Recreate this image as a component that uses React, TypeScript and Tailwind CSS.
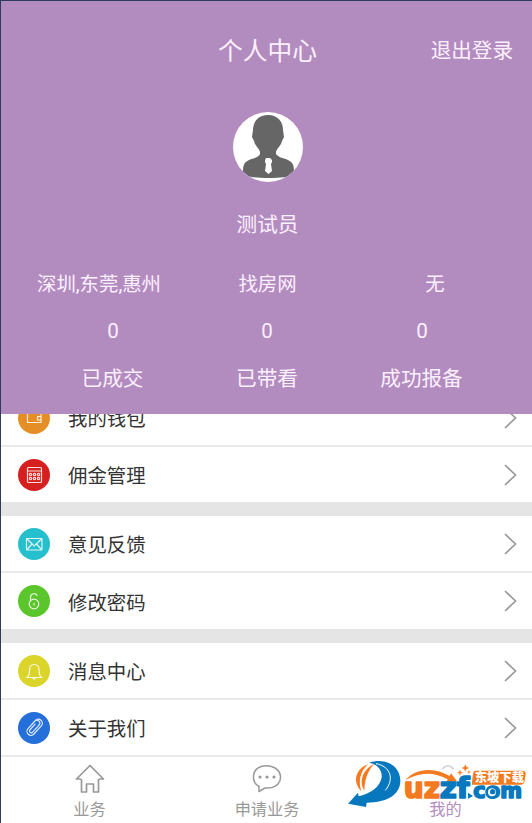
import React from 'react';

const Wallet = () => (
  <g>
    <path d="M9.500 11.500h13.500v9h-13.500z M9.500 11.500l2-2.500h10l1.500 2.500" />
    <path d="M23 14.500h-3.500v3.500h3.500" />
  </g>
);
const Calculator = () => (
  <g>
    <rect x="9.500" y="8.500" width="14" height="15" rx="1" />
    <path d="M9.500 12h14" />
    {[15.5, 19.5].map((y) =>
      [12.5, 16.500, 20.500].map((x) => <circle key={`${x}-${y}`} cx={x} cy={y} r="1.200" />),
    )}
  </g>
);
const Mail = () => (
  <g>
    <rect x="8.500" y="10.500" width="15.500" height="11.500" rx="0.500" />
    <path d="M9 11l7.250 7 7.250-7 M9 21.500l5-5.500 M23.500 21.500l-5-5.500" />
  </g>
);
const Lock = () => (
  <g>
    <circle cx="16" cy="19" r="4.800" />
    <path d="M12.500 16v-3.800a3.500 3.500 0 0 1 6.800-1.200 M16 18v2.500" />
  </g>
);
const Bell = () => (
  <path d="M9 22.500h14.500c-2.300-1.700-2.500-3.500-2.500-7.500 0-3.300-2-5.500-4.750-5.500s-4.750 2.200-4.750 5.500c0 4-.2 5.800-2.500 7.500z M14.500 22.800q1.700 2.800 3.500 0" />
);
const Clip = () => (
  <g transform="rotate(42 16 16)">
    <path d="M20 12v8.500a4 4 0 0 1-8 0v-10a2.900 2.900 0 0 1 5.800 0v9.500a1.800 1.800 0 0 1-3.600 0v-8 M12 12v-2.500a4 4 0 0 1 8 0V13" />
  </g>
);

function Row({ label, color, height = 'h-[57px] border-b-2', children }: {
  label: string; color: string; height?: string; children: React.ReactNode;
}) {
  return (
    <div className={`flex ${height} shrink-0 items-center border-[#e9e9e9] bg-white pl-[17px] pr-[15px]`}>
      <svg className={`h-8 w-8 rounded-full ${color}`} viewBox="0 0 32 32" fill="none" stroke="#fff" strokeOpacity=".85" strokeWidth="1.200">
        {children}
      </svg>
      <span className="ml-[18px] pt-[5px] text-[19.4px] leading-7 text-[#333]">{label}</span>
      <svg className="ml-auto h-[22px] w-[14px]" viewBox="0 0 14 22" fill="none" stroke="#999" strokeWidth="1.700">
        <path d="M2 1l10.500 10L2 21" />
      </svg>
    </div>
  );
}

function Watermark() {
  return (
    <svg className="absolute left-[339px] top-[749px] h-[73px] w-[192px]" viewBox="0 0 576 219">
      <path d="M64 124C38 98 44 58 84 43C59 66 55 94 64 124z" fill="#f47a20" />
      <path d="M73 122C55 92 70 58 102 42C81 66 74 92 73 122z" fill="#f47a20" />
      <path d="M88 38C135 23 180 45 181 91C182 132 145 158 80 158L78 171L24 161L54 128L56 139C95 130 121 109 125 82C127 59 112 43 88 38z" fill="#0878be" />
      <path d="M108 41C150 48 165 86 136 121" fill="none" stroke="#fff" strokeWidth="3" />
      <path d="M196 91C225 53 285 51 329 78L333 70L351 94L319 98L323 88C281 63 235 67 196 91z" fill="#f47a20" />
      <g fontFamily="DejaVu Sans, sans-serif" fontWeight="700" strokeWidth="5" strokeLinejoin="round">
        <text x="191" y="143" fontSize="84" textLength="109" lengthAdjust="spacingAndGlyphs" fill="#f47a20" stroke="#f47a20">uz</text>
        <text x="299" y="143" fontSize="84" textLength="90" lengthAdjust="spacingAndGlyphs" fill="#0878be" stroke="#0878be">zf</text>
        <text x="400" y="144" fontSize="65" textLength="146" lengthAdjust="spacingAndGlyphs" fill="#0878be" stroke="#0878be">com</text>
      </g>
      <path d="M384 128l15 10-15 8z" fill="#0878be" />
      <circle cx="456" cy="127" r="16" fill="#fff" stroke="#0878be" strokeWidth="8" />
      <circle cx="458" cy="125" r="8" fill="#0878be" />
      <path d="M408 62H548Q558 62 557 72L554 93Q552 104 542 104H395L399 72Q400 62 408 62z" fill="#f47a20" />
      <text x="404" y="97" fontSize="36" fontWeight="900" fontFamily="Noto Sans CJK SC, sans-serif" textLength="148" lengthAdjust="spacingAndGlyphs" fill="#fff">东坡下载</text>
      <path d="M376 44l3 7 7 3-7 3-3 7-3-7-7-3 7-3z M360 60l2 6 6 2-6 2-2 6-2-6-6-2 6-2z M387 61l1 4 4 1-4 1-1 4-1-4-4-1 4-1z" fill="#f47a20" stroke="#f47a20" />
      <path d="M307 57q16-19 34 0" fill="none" stroke="#cfc5d3" strokeWidth="4" />
    </svg>
  );
}

export default function App() {
  return (
    <div className="relative flex h-[823px] w-[532px] flex-col overflow-hidden border-l border-t border-[#2c3c5d] bg-white font-['Roboto','Noto_Sans_CJK_SC',sans-serif]">
      <header className="flex h-[413px] shrink-0 flex-col bg-[#b38cbf] text-[#fcf0ff]">
        <div className="grid h-[99px] grid-cols-[1fr_auto_1fr] items-center pl-[1px] pr-[19px] pt-[1px]">
          <span />
          <h1 className="pl-[20px] pt-px text-[24.7px] leading-8">个人中心</h1>
          <span className="text-right text-[20.6px] leading-7">退出登录</span>
        </div>
        <svg className="mx-auto mt-[12px] h-[70px] w-[70px] shrink-0 translate-x-[1px] rounded-full bg-white" viewBox="0 0 70 70">
          <path d="M35 3c10 0 15 7 15 15l1 7-2 4c-1 5-5 7-6 11v2c3 4 8 4 12 6 6 3 6 6 6 15-8 4-43 4-51 0 0-9 0-12 6-15 4-2 9-2 11-6v-2c-1-4-5-6-6-11l-2-4 1-7C20 10 25 3 35 3z" fill="#666" />
          <path d="M33 46h4l2 2v2l-1 2 1 7-3.500 3-3.500-3 1-7-1-2v-2z" fill="#fff" />
        </svg>
        <div className="mt-[29px] pl-[2px] text-center text-[20.6px] leading-7">测试员</div>
        <div className="mt-[32px] grid grid-cols-[196px_141px_194px] text-center text-[19.4px] leading-7">
          <span>深圳,东莞,惠州</span><span>找房网</span><span>无</span>
        </div>
        <div className="mt-[18px] grid grid-cols-[224px_84px_226px] text-center text-[20.6px] leading-7">
          <span>0</span><span>0</span><span>0</span>
        </div>
        <div className="mt-5 grid grid-cols-[223px_86px_223px] text-center text-[20.6px] leading-7">
          <span>已成交</span><span>已带看</span><span>成功报备</span>
        </div>
      </header>
      <main className="flex shrink-0 flex-col bg-[#e5e5e5]">
        <div className="flex h-[33px] flex-col justify-end overflow-hidden">
          <Row label="我的钱包" color="bg-[#e58e25]"><Wallet /></Row>
        </div>
        <Row label="佣金管理" color="bg-[#d5201f]" height="h-[55px]"><Calculator /></Row>
        <div className="mt-[14px]">
          <Row label="意见反馈" color="bg-[#26bfcd]"><Mail /></Row>
          <Row label="修改密码" color="bg-[#5ac62b]" height="h-[56px]"><Lock /></Row>
        </div>
        <div className="mt-[14px]">
          <Row label="消息中心" color="bg-[#dbd42b]"><Bell /></Row>
          <Row label="关于我们" color="bg-[#246fda]"><Clip /></Row>
        </div>
      </main>
      <nav className="grid flex-1 grid-cols-3 text-center text-[16.200px] leading-6 text-[#999]">
        <div className="flex flex-col items-center pt-[7px]">
          <svg className="h-[30px] w-[30px]" viewBox="0 0 30 30" fill="none" stroke="#999" strokeWidth="1.700" strokeLinejoin="round"><path d="M6 15H1.500L15 1.500 28.500 15H24M6.500 15v13h5v-8h7v8h5V15" /></svg>
          <span className="mt-1">业务</span>
        </div>
        <div className="flex flex-col items-center pl-px pt-[7px]">
          <svg className="h-[30px] w-[30px]" viewBox="0 0 30 30" fill="none" stroke="#999" strokeWidth="1.500"><path d="M7 27.500v-5C-1 18-.5 5 10 2.200 19 0 28.500 5 28.500 13S21 24.800 13 24z" strokeLinejoin="round" /><g fill="#999" stroke="none"><circle cx="8" cy="13" r="1.600" /><circle cx="15" cy="13" r="1.600" /><circle cx="22" cy="13" r="1.600" /></g></svg>
          <span className="mt-1">申请业务</span>
        </div>
        <div className="pl-[4px] pt-[41px] text-[#b38cbf]">我的</div>
      </nav>
      <Watermark />
    </div>
  );
}
